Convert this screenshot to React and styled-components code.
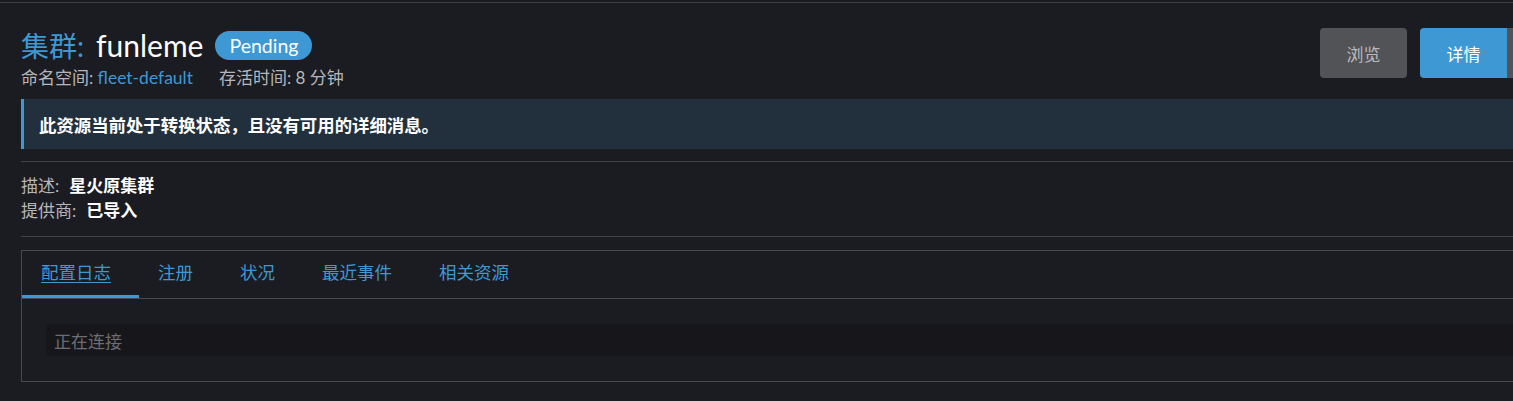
import styled, { createGlobalStyle } from "styled-components";

const Global = createGlobalStyle`
  html, body {
    margin: 0;
    background: #1b1c21;
    overflow: hidden;
  }
  body {
    font-family: Lato, "Noto Sans CJK SC", sans-serif;
    color: #b6b6bb;
  }
`;

const Page = styled.div`
  width: 1568px;
  box-sizing: border-box;
  margin-top: 2px;
  border-top: 1px solid #3c3d42;
  padding: 0 21px;
`;

const Header = styled.header`
  display: flex;
  justify-content: space-between;
  align-items: flex-start;
  padding-top: 25px;
`;

const TitleLine = styled.div`
  display: flex;
  align-items: center;
  height: 34px;
`;

const Title = styled.h1`
  margin: 0;
  font-size: 28px;
  font-weight: 400;
  line-height: 34px;
  color: #ffffff;
`;

const Kind = styled.span`
  color: #3d98d3;
  margin-right: 12px;
`;

const Name = styled.span`
  font-size: 30px;
`;

const Badge = styled.span`
  margin-left: 12px;
  height: 29px;
  line-height: 29px;
  padding: 0 14px;
  border-radius: 15px;
  background: #3d98d3;
  color: #ffffff;
  font-size: 19.5px;
`;

const Meta = styled.div`
  display: flex;
  margin-top: 6px;
  font-size: 17px;
  line-height: 20px;
`;

const MetaItem = styled.span`
  margin-right: 26px;
`;

const Link = styled.a`
  color: #3d98d3;
  font-size: 17.5px;
  text-decoration: none;
`;

const Actions = styled.div`
  display: flex;
  gap: 13px;
`;

const Button = styled.button`
  width: 87px;
  height: 50px;
  border: none;
  border-radius: ${(p) => (p.$split ? "4px 0 0 4px" : "4px")};
  background: ${(p) => (p.$primary ? "#3d98d3" : "#525357")};
  color: ${(p) => (p.$primary ? "#ffffff" : "#b9b9bd")};
  font-family: inherit;
  font-size: 17px;
`;

const SplitGroup = styled.div`
  display: flex;
`;

const Toggle = styled.button`
  width: 40px;
  height: 50px;
  border: none;
  border-radius: 0 4px 4px 0;
  background: #525357;
`;

const Banner = styled.div`
  margin-top: 11px;
  height: 50px;
  display: flex;
  align-items: center;
  padding-left: 15px;
  border-left: 3px solid #3d98d3;
  background: #22303e;
  color: #ffffff;
  font-size: 17.4px;
  font-weight: 600;
`;

const Divider = styled.div`
  height: 1px;
  background: #404146;
  margin-top: ${(p) => p.$top}px;
`;

const Details = styled.div`
  margin-top: 11px;
  font-size: 17px;
  line-height: 25px;
`;

const Value = styled.span`
  margin-left: 10px;
  color: #ffffff;
  font-weight: 600;
`;

const TabsBox = styled.section`
  margin-top: 13px;
  border: 1px solid #48494e;
`;

const TabList = styled.nav`
  display: flex;
  border-bottom: 1px solid #48494e;
`;

const Tab = styled.a`
  display: flex;
  align-items: center;
  height: 47px;
  box-sizing: border-box;
  padding: 0 28px 6px 19px;
  color: #3d98d3;
  font-size: 17.5px;
  text-decoration: ${(p) => (p.$active ? "underline" : "none")};
  text-underline-offset: 3px;
  box-shadow: ${(p) => (p.$active ? "inset 0 -3px 0 #3d98d3" : "none")};
`;

const TabPanel = styled.div`
  padding: 25px 24px;
`;

const LogBox = styled.div`
  height: 32px;
  display: flex;
  align-items: center;
  padding: 0 8px;
  background: #17171b;
  color: #6d6e73;
  font-size: 17px;
`;

const tabs = ["配置日志", "注册", "状况", "最近事件", "相关资源"];

export default function App() {
  return (
    <>
      <Global />
      <Page>
        <Header>
          <div>
            <TitleLine>
              <Title>
                <Kind>集群:</Kind>
                <Name>funleme</Name>
              </Title>
              <Badge>Pending</Badge>
            </TitleLine>
            <Meta>
              <MetaItem>
                命名空间: <Link>fleet-default</Link>
              </MetaItem>
              <MetaItem>存活时间: 8 分钟</MetaItem>
            </Meta>
          </div>
          <Actions>
            <Button>浏览</Button>
            <SplitGroup>
              <Button $primary $split>
                详情
              </Button>
              <Toggle />
            </SplitGroup>
          </Actions>
        </Header>

        <Banner>此资源当前处于转换状态，且没有可用的详细消息。</Banner>

        <Divider $top={12} />
        <Details>
          <div>
            描述:<Value>星火原集群</Value>
          </div>
          <div>
            提供商:<Value>已导入</Value>
          </div>
        </Details>
        <Divider $top={13} />

        <TabsBox>
          <TabList>
            {tabs.map((t, i) => (
              <Tab key={t} $active={i === 0}>
                {t}
              </Tab>
            ))}
          </TabList>
          <TabPanel>
            <LogBox>正在连接</LogBox>
          </TabPanel>
        </TabsBox>
      </Page>
    </>
  );
}
